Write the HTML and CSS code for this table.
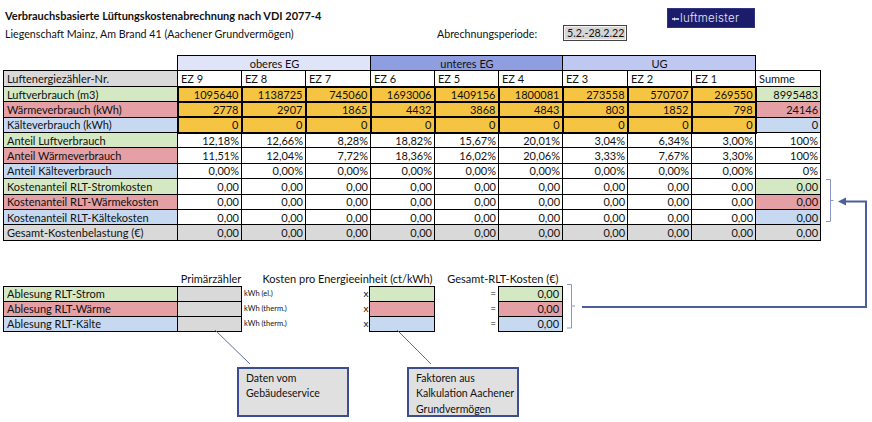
FILE: index.html
```html
<!DOCTYPE html>
<html lang="de">
<head>
<meta charset="utf-8">
<title>Lüftungskostenabrechnung</title>
<link rel="stylesheet" href="styles.css">
</head>
<body>
<div class="page">
  <header class="head">
    <div class="title">Verbrauchsbasierte Lüftungskostenabrechnung nach VDI 2077-4</div>
    <div class="logo"><svg class="logo-mark" width="7" height="6" viewBox="0 0 7 6"><path d="M0 2.2 L2 2.2 L2 1 L4 3 L2 5 L2 3.8 L0 3.8 Z" fill="#e6e8f4"/><rect x="3.5" y="2.2" width="3.5" height="1.6" fill="#e6e8f4"/></svg><span>luftmeister</span></div>
    <div class="subtitle">Liegenschaft Mainz, Am Brand 41 (Aachener Grundvermögen)</div>
    <div class="period-label">Abrechnungsperiode:</div>
    <div class="period">5.2.-28.2.22</div>
  </header>

  <table class="grid">
    <colgroup>
      <col class="c-label"><col class="c-n"><col class="c-n"><col class="c-w"><col class="c-n"><col class="c-n"><col class="c-n"><col class="c-w"><col class="c-n"><col class="c-n"><col class="c-sum">
    </colgroup>
    <tr class="groups">
      <td class="blank"></td>
      <td colspan="3" class="g-ob">oberes EG</td>
      <td colspan="3" class="g-un">unteres EG</td>
      <td colspan="3" class="g-ug">UG</td>
      <td class="blank"></td>
    </tr>
    <tr class="hdr">
      <td class="lbl grey">Luftenergiezähler-Nr.</td>
      <td>EZ 9</td><td>EZ 8</td><td>EZ 7</td><td>EZ 6</td><td>EZ 5</td><td>EZ 4</td><td>EZ 3</td><td>EZ 2</td><td>EZ 1</td><td>Summe</td>
    </tr>
    <tr class="yel">
      <td class="lbl green">Luftverbrauch (m3)</td>
      <td class="y">1095640</td><td class="y">1138725</td><td class="y">745060</td><td class="y">1693006</td><td class="y">1409156</td><td class="y">1800081</td><td class="y">273558</td><td class="y">570707</td><td class="y">269550</td><td class="green">8995483</td>
    </tr>
    <tr class="yel">
      <td class="lbl pink">Wärmeverbrauch (kWh)</td>
      <td class="y">2778</td><td class="y">2907</td><td class="y">1865</td><td class="y">4432</td><td class="y">3868</td><td class="y">4843</td><td class="y">803</td><td class="y">1852</td><td class="y">798</td><td class="pink">24146</td>
    </tr>
    <tr class="yel">
      <td class="lbl blue">Kälteverbrauch (kWh)</td>
      <td class="y">0</td><td class="y">0</td><td class="y">0</td><td class="y">0</td><td class="y">0</td><td class="y">0</td><td class="y">0</td><td class="y">0</td><td class="y">0</td><td class="blue">0</td>
    </tr>
    <tr>
      <td class="lbl green">Anteil Luftverbrauch</td>
      <td>12,18%</td><td>12,66%</td><td>8,28%</td><td>18,82%</td><td>15,67%</td><td>20,01%</td><td>3,04%</td><td>6,34%</td><td>3,00%</td><td>100%</td>
    </tr>
    <tr>
      <td class="lbl pink">Anteil Wärmeverbrauch</td>
      <td>11,51%</td><td>12,04%</td><td>7,72%</td><td>18,36%</td><td>16,02%</td><td>20,06%</td><td>3,33%</td><td>7,67%</td><td>3,30%</td><td>100%</td>
    </tr>
    <tr>
      <td class="lbl blue">Anteil Kälteverbrauch</td>
      <td>0,00%</td><td>0,00%</td><td>0,00%</td><td>0,00%</td><td>0,00%</td><td>0,00%</td><td>0,00%</td><td>0,00%</td><td>0,00%</td><td>0%</td>
    </tr>
    <tr>
      <td class="lbl green">Kostenanteil RLT-Stromkosten</td>
      <td>0,00</td><td>0,00</td><td>0,00</td><td>0,00</td><td>0,00</td><td>0,00</td><td>0,00</td><td>0,00</td><td>0,00</td><td class="green">0,00</td>
    </tr>
    <tr>
      <td class="lbl pink">Kostenanteil RLT-Wärmekosten</td>
      <td>0,00</td><td>0,00</td><td>0,00</td><td>0,00</td><td>0,00</td><td>0,00</td><td>0,00</td><td>0,00</td><td>0,00</td><td class="pink">0,00</td>
    </tr>
    <tr>
      <td class="lbl blue">Kostenanteil RLT-Kältekosten</td>
      <td>0,00</td><td>0,00</td><td>0,00</td><td>0,00</td><td>0,00</td><td>0,00</td><td>0,00</td><td>0,00</td><td>0,00</td><td class="blue">0,00</td>
    </tr>
    <tr class="total">
      <td class="lbl grey">Gesamt-Kostenbelastung (€)</td>
      <td>0,00</td><td>0,00</td><td>0,00</td><td>0,00</td><td>0,00</td><td>0,00</td><td>0,00</td><td>0,00</td><td>0,00</td><td>0,00</td>
    </tr>
  </table>

  <table class="calc">
    <colgroup>
      <col class="k-label"><col class="k-prim"><col class="k-unit"><col class="k-op"><col class="k-cost"><col class="k-gap"><col class="k-op2"><col class="k-total">
    </colgroup>
    <tr class="calc-head">
      <td></td>
      <td class="h-prim">Primärzähler</td>
      <td colspan="3" class="h-cost">Kosten pro Energieeinheit (ct/kWh)</td>
      <td colspan="3" class="h-total">Gesamt-RLT-Kosten (€)</td>
    </tr>
    <tr>
      <td class="lbl green bx">Ablesung RLT-Strom</td>
      <td class="grey bx"></td>
      <td class="unit">kWh (el.)</td>
      <td class="op">x</td>
      <td class="green bx"></td>
      <td></td>
      <td class="op">=</td>
      <td class="green bx num">0,00</td>
    </tr>
    <tr>
      <td class="lbl pink bx">Ablesung RLT-Wärme</td>
      <td class="grey bx"></td>
      <td class="unit">kWh (therm.)</td>
      <td class="op">x</td>
      <td class="pink bx"></td>
      <td></td>
      <td class="op">=</td>
      <td class="pink bx num">0,00</td>
    </tr>
    <tr>
      <td class="lbl blue bx">Ablesung RLT-Kälte</td>
      <td class="grey bx"></td>
      <td class="unit">kWh (therm.)</td>
      <td class="op">x</td>
      <td class="blue bx"></td>
      <td></td>
      <td class="op">=</td>
      <td class="blue bx num">0,00</td>
    </tr>
  </table>

  <div class="notes">
    <div class="note">Daten vom<br>Gebäudeservice</div>
    <div class="note">Faktoren aus<br>Kalkulation Aachener<br>Grundvermögen</div>
  </div>

  <svg class="overlay" width="872" height="422" viewBox="0 0 872 422">
    <path d="M826 179.5 H830.5 V221.5 H826 M830.5 200.5 H833.5" fill="none" stroke="#8a98c8" stroke-width="1"/>
    <path d="M567 284.5 H571.5 V328 H567 M571.5 306 H575" fill="none" stroke="#8a98c8" stroke-width="1"/>
    <polyline points="844,201.5 866,201.5 866,307 582,307" fill="none" stroke="#4c5f9c" stroke-width="2"/>
    <polygon points="838,201.5 846,197.5 846,205.5" fill="#4c5f9c"/>
    <line x1="215" y1="330" x2="250" y2="364" stroke="#5a6ca8" stroke-width="1"/>
    <line x1="397" y1="330" x2="431" y2="364" stroke="#5a6ca8" stroke-width="1"/>
  </svg>
</div>
</body>
</html>
```

FILE: styles.css
```css
* { box-sizing: border-box; }

body {
  margin: 0;
  background: #ffffff;
  font-family: Lato, "Open Sans", sans-serif;
  color: #111111;
}

.page {
  position: relative;
  width: 872px;
  height: 422px;
  padding: 7px 0 0 3px;
  overflow: hidden;
}

/* ---------- header ---------- */
.head {
  display: grid;
  grid-template-columns: 432px 126px 64px 40px 88px;
  grid-template-rows: 18px 17px;
  padding-left: 2px;
  font-size: 10.7px;
}

.title {
  grid-column: 1 / 4;
  grid-row: 1;
  font-weight: 700;
  font-size: 11px;
  line-height: 18px;
}

.logo {
  grid-column: 5;
  grid-row: 1;
  align-self: start;
  margin-top: 1px;
  height: 20px;
  background: #1b1d6b;
  border: 1px solid #30337e;
  display: flex;
  align-items: center;
  padding-left: 4px;
  gap: 1px;
  color: #e6e8f4;
  font-family: Inter, "DejaVu Sans", sans-serif;
  font-size: 11.5px;
  font-weight: 300;
  letter-spacing: 0.3px;
}

.logo-mark { flex: none; margin-top: 1px; }

.subtitle {
  grid-column: 1;
  grid-row: 2;
  line-height: 17px;
}

.period-label {
  grid-column: 2;
  grid-row: 2;
  line-height: 17px;
}

.period {
  grid-column: 3;
  grid-row: 2;
  height: 16px;
  border: 1px solid #444;
  background: #d6d6d6;
  line-height: 14px;
  padding-left: 3px;
  box-shadow: inset 0 0 0 1px #f2f2f2;
}

/* ---------- main table ---------- */
.grid {
  margin-top: 13px;
  border-collapse: collapse;
  table-layout: fixed;
  width: 817px;
  font-size: 11px;
}

.c-label { width: 174px; }
.c-n { width: 64px; }
.c-w { width: 65px; }
.c-sum { width: 65px; }

.grid td {
  border: 1px solid #000;
  height: 15.36px;
  padding: 0 2px 0 3px;
  line-height: 13px;
  text-align: right;
  white-space: nowrap;
  overflow: hidden;
  background: #fff;
}

.grid td.blank {
  border: none;
  background: transparent;
}

.grid .groups td { text-align: center; height: 15px; }
.grid .g-ob { background: #dfe4f8; }
.grid .g-un { background: #8f9ee1; }
.grid .g-ug { background: #bec8f1; }

.grid .hdr td { text-align: left; height: 16px; }

.grid td.lbl { text-align: left; }

.grid td.y {
  background: #f6c443;
  border: 2px solid #000;
}

.grid .total td { background: #d9d9d9; }

td.green { background: #d5e8c4 !important; }
td.pink { background: #e4a0a5 !important; }
td.blue { background: #c6d9f1 !important; }
td.grey { background: #d9d9d9 !important; }

/* ---------- calc block ---------- */
.calc {
  margin-top: 31px;
  border-collapse: collapse;
  table-layout: fixed;
  width: 559px;
  font-size: 11px;
}

.k-label { width: 174px; }
.k-prim { width: 64px; }
.k-unit { width: 122px; }
.k-op { width: 6px; }
.k-cost { width: 65px; }
.k-gap { width: 52px; }
.k-op2 { width: 12px; }
.k-total { width: 64px; }

.calc td {
  height: 15px;
  padding: 0;
  line-height: 13px;
  white-space: nowrap;
}

.calc .calc-head td { height: 14px; line-height: 14px; }

.calc td.bx { border: 1px solid #000; }
.calc td.lbl { padding-left: 3px; }
.calc td.num { text-align: right; padding-right: 3px; }

.h-prim { text-align: center; padding-left: 3px !important; }
.h-cost { text-align: right; padding-right: 2px !important; }
.h-total { text-align: right; padding-right: 4px !important; }

.calc td.unit {
  font-size: 7.5px;
  padding-left: 2px;
}

.calc td.op {
  text-align: right;
  padding-right: 2px;
  font-size: 10px;
}

/* ---------- notes ---------- */
.notes {
  display: flex;
  gap: 58px;
  margin-top: 35px;
  padding-left: 234px;
}

.note {
  width: 112px;
  height: 50px;
  background: #e0e0e0;
  border: 2px solid #3c4f8c;
  padding: 2px 0 0 7px;
  font-size: 10.5px;
  line-height: 15.5px;
  white-space: nowrap;
}

/* ---------- annotation overlay ---------- */
.overlay {
  position: absolute;
  left: 0;
  top: 0;
  pointer-events: none;
}
```
